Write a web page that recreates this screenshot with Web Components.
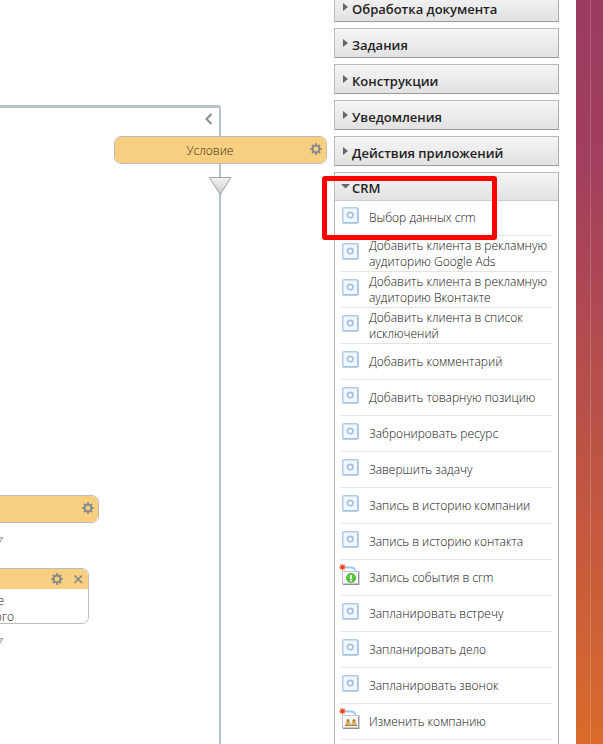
<!DOCTYPE html>
<html lang="ru">
<head>
<meta charset="utf-8">
<title>Дизайнер бизнес-процессов</title>
<style>
body{margin:0;background:#fff;color:#333;font-family:"Open Sans","Noto Sans",sans-serif;font-size:12px;line-height:16px}
</style>
</head>
<body>
<process-designer></process-designer>
<script>
const define=(name,html,setup)=>{
  const t=document.createElement('template');
  t.innerHTML=html;
  customElements.define(name,class extends HTMLElement{
    constructor(){
      super();
      this.attachShadow({mode:'open'}).append(t.content.cloneNode(true));
    }
    connectedCallback(){ if(setup) setup(this,this.shadowRoot); }
  });
};

const box=`<svg width="22" height="24" viewBox="0 0 22 24"><rect x="3.75" y="4.75" width="15" height="15" rx="1" fill="#edf8ff" stroke="#b3cbe9" stroke-width="1.5"/><path d="M4 20H19V5" fill="none" stroke="#9dbae0"/><circle cx="11.2" cy="12" r="2.7" fill="#fff" stroke="#a8bce0" stroke-width="1.7"/></svg>`;
const card=inner=>`<svg width="22" height="24" viewBox="0 0 22 24"><path d="M6 4.500h6q4 0 4.500 4" fill="none" stroke="#9ac7f5" stroke-width="1.800"/><path d="M3.500 8.500H19.500V21H3.500Z" fill="#f5f6fa" stroke="#c3c6d0"/><path d="M4 21.300H19.800V8.500" fill="none" stroke="#8a8d9a" stroke-width="1.200"/>${inner}<path d="M0.300 4.200h6.400M3.500 1v6.400M1.300 2l4.400 4.400M5.700 2l-4.400 4.400" stroke="#f4613a" stroke-width="1.200"/><circle cx="3.500" cy="4.200" r="1.700" fill="#ee3e14"/></svg>`;
const icons={
  box,
  event:card('<circle cx="12" cy="15" r="4.400" fill="#57c93b" stroke="#3fae2a"/><path d="M12 12v4M12 17v1.500" stroke="#fff" stroke-width="2"/>'),
  company:card('<path d="M6.500 18.500v-2.500l1.500-1h2l1.500 1v2.500ZM12.500 18.500v-2.500l1.500-1h2l1.500 1v2.500Z" fill="#dcb062"/><circle cx="9" cy="13.700" r="1.700" fill="#b98a3c"/><circle cx="15" cy="13.700" r="1.700" fill="#b98a3c"/><path d="M6 18.500h12" stroke="#a5803c"/>')
};

define('gear-button',`<style>
:host{display:block;width:12px;height:12px}
button{display:block;border:0;background:none;padding:0;width:12px;height:12px}
svg{display:block}
</style><button type="button" aria-label="Настройки"><svg width="12" height="12" viewBox="0 0 12 12" fill="none" stroke="#84888a"><circle cx="6" cy="6" r="3.400" stroke-width="1.900"/><path d="M6 .3v2M6 9.700v2M.3 6h2M9.700 6h2M2 2l1.300 1.300M8.700 8.700L10 10M2 10l1.300-1.300M8.700 3.300L10 2" stroke-width="2"/></svg></button>`);

define('flow-arrow',`<style>
:host{display:block}svg{display:block}
</style><svg width="24" height="20" viewBox="0 0 24 20"><defs><linearGradient id="g" x2="0" y2="1"><stop stop-color="#f3f3f3"/><stop offset="1" stop-color="#c9c9c9"/></linearGradient></defs><path d="M1.500 1.500H23L12.200 18.500Z" fill="url(#g)" stroke="#a3a3a3"/></svg>`);

define('flow-node',`<style>
:host{display:block;box-sizing:border-box;border:1px solid #bdbdb8;border-radius:7px;overflow:hidden;background:#fff;color:#222;font-weight:350}
header{box-sizing:border-box;display:flex;justify-content:flex-end;align-items:flex-start;gap:9px;height:26px;padding:6px 4px 0;background:#f8cf81;color:#3d2d14}
.title{flex:1;text-align:center}
gear-button{flex:none}
:host([body]) header{height:20px;padding-top:4px}
.body{display:none;padding:4px 0 0 4px;height:30px}
:host([body]) .body{display:block}
button{display:none;border:0;background:none;padding:0;width:12px;height:12px}
:host([body]) button{display:block}
svg{display:block}
</style><header><span class="title"><slot name="title"></slot></span><gear-button></gear-button><button type="button" aria-label="Удалить"><svg width="12" height="12" viewBox="0 0 12 12"><path d="M2.500 2.500l7.500 7.500M10 2.500L2.500 10" stroke="#84888a" stroke-width="1.700"/></svg></button></header><div class="body"><slot></slot></div>`);

define('flow-canvas',`<style>
:host{display:block;position:relative;overflow:hidden}
:host>*{position:absolute}
.branch{left:0;top:105px;width:219px;height:31px;border-top:3px solid #b4c2d0;border-right:2px solid #b4c2d0;border-top-right-radius:3px}
.stem{left:219px;top:164px;bottom:0;width:2px;background:#b4c2d0}
.back{left:203px;top:113px;width:12px;height:12px;border:0;background:none;padding:0}
.back svg{display:block}
.cond{left:114px;top:136px;width:213px}
.a1{left:208px;top:176px}
.n1{left:-114px;top:495px;width:213px}
.n2{left:-110px;top:568px;width:199px}
.a2{left:-19px;top:535px}
.a3{left:-19px;top:636px}
p{margin:0;text-align:right;color:#111}
.l1{width:109px}
.l2{width:119px}
</style>
<div class="branch"></div><div class="stem"></div>
<button class="back" type="button" aria-label="Свернуть"><svg width="12" height="12" viewBox="0 0 12 12"><path d="M8.500 1L3.500 6l5 5" fill="none" stroke="#858b93" stroke-width="2"/></svg></button>
<flow-node class="cond"><span slot="title">Условие</span></flow-node>
<flow-arrow class="a1"></flow-arrow>
<flow-node class="n1"></flow-node>
<flow-node class="n2" body><p class="l1">е</p><p class="l2">ого</p></flow-node>
<svg class="a2" width="24" height="12" viewBox="0 0 24 12"><path d="M1 2.500H22L18 9" fill="#ddd" stroke="#aaa"/></svg>
<svg class="a3" width="24" height="12" viewBox="0 0 24 12"><path d="M1 2.500H22L18 9" fill="#ddd" stroke="#aaa"/></svg>`);

define('activity-group',`<style>
:host{display:block;border:1px solid #bbb;border-right-color:#aaa;border-bottom-color:#999}
h3{margin:0;font:inherit}
button{box-sizing:border-box;display:flex;align-items:center;gap:3px;width:100%;height:28px;border:0;padding:3px 0 0 7px;background:linear-gradient(#f5f5f5,#e2e2e2);color:#222;font:600 13px/18px "Open Sans","Noto Sans",sans-serif;text-align:left}
svg{width:7px;height:12px;flex:none;fill:#666}
.down{display:none}
:host([open]) .right{display:none}
:host([open]) .down{display:block;width:9px;margin:0 -1px}
:host([open]) button{border-bottom:1px solid #ccc}
</style><h3><button type="button"><svg class="right" viewBox="0 0 7 12"><path d="M1 0v8l5-4Z"/></svg><svg class="down" viewBox="0 0 9 12"><path d="M0 2h9L4.500 6.500Z"/></svg><span></span></button></h3><slot></slot>`,
(el,r)=>{
  r.querySelector('span').textContent=el.getAttribute('label');
  r.querySelector('button').setAttribute('aria-expanded',el.hasAttribute('open'));
});

define('activity-item',`<style>
:host{box-sizing:border-box;display:flex;align-items:center;gap:8px;height:36px;margin:0 6px;padding-top:1px;border-bottom:1px solid #e3e3e3;color:#111;font-weight:340}
.icon{flex:none;align-self:flex-start;width:22px;height:24px;margin:2px 0 0 -2px}
svg{display:block}
.text{flex:1}
</style><span class="icon"></span><span class="text"><slot></slot></span>`,
(el,r)=>{ r.querySelector('.icon').innerHTML=icons[el.getAttribute('icon')||'box']; });

define('activity-panel',`<style>
:host{display:flex;flex-direction:column;gap:6px;position:relative;min-width:0;margin-top:-8px}
.items{margin-top:-1px}
.mark{position:absolute;left:-12px;top:184px;box-sizing:border-box;width:175px;height:64px;border:5px solid #fe0000;border-radius:3px;pointer-events:none}
</style>
<activity-group label="Обработка документа"></activity-group>
<activity-group label="Задания"></activity-group>
<activity-group label="Конструкции"></activity-group>
<activity-group label="Уведомления"></activity-group>
<activity-group label="Действия приложений"></activity-group>
<activity-group label="CRM" open><div class="items">
<activity-item>Выбор данных crm</activity-item>
<activity-item>Добавить клиента в рекламную аудиторию Google Ads</activity-item>
<activity-item>Добавить клиента в рекламную аудиторию Вконтакте</activity-item>
<activity-item>Добавить клиента в список исключений</activity-item>
<activity-item>Добавить комментарий</activity-item>
<activity-item>Добавить товарную позицию</activity-item>
<activity-item>Забронировать ресурс</activity-item>
<activity-item>Завершить задачу</activity-item>
<activity-item>Запись в историю компании</activity-item>
<activity-item>Запись в историю контакта</activity-item>
<activity-item icon="event">Запись события в crm</activity-item>
<activity-item>Запланировать встречу</activity-item>
<activity-item>Запланировать дело</activity-item>
<activity-item>Запланировать звонок</activity-item>
<activity-item icon="company">Изменить компанию</activity-item>
<activity-item icon="company"></activity-item>
</div></activity-group>
<div class="mark"></div>`);

define('process-designer',`<style>
:host{display:grid;grid-template-columns:minmax(0,1fr) 225px 17px 27px;height:100vh;overflow:hidden}
.edge{grid-column:4;background:linear-gradient(90deg,transparent 14px,#ffffff30 14px,#ffffff30 15px,transparent 15px),linear-gradient(#9c3b62,#a23f5d 22%,#b04b50 42%,#c85c3a 74%,#dd6e28)}
</style><flow-canvas></flow-canvas><activity-panel></activity-panel><div class="edge"></div>`);
</script>
</body>
</html>
